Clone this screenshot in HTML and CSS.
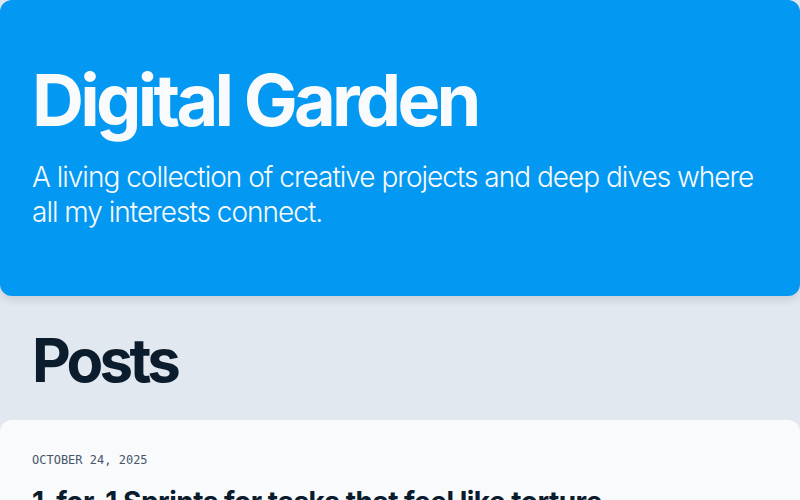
FILE: index.html
```html
<!DOCTYPE html>
<html lang="en">
<head>
<meta charset="utf-8">
<title>Digital Garden</title>
<link rel="stylesheet" href="styles.css">
</head>
<body>
<header class="hero">
  <h1 class="hero-title">Digital Garden</h1>
  <p class="hero-sub">A living collection of creative projects and deep dives where all my interests connect.</p>
</header>
<main class="content">
  <h2 class="section-title">Posts</h2>
  <article class="post-card">
    <time class="post-date">OCTOBER 24, 2025</time>
    <h3 class="post-title">1-for-1 Sprints for tasks that feel like torture</h3>
  </article>
</main>
</body>
</html>
```
FILE: styles.css
```css
* { box-sizing: border-box; }
html, body { margin: 0; padding: 0; }
body {
  background: #e2e8f0;
  font-family: "Inter", "Noto Sans", sans-serif;
  color: #0b1c2c;
}
.hero {
  background: #0398f1;
  border-radius: 12px;
  padding: 64px 32px 66px;
  color: #f8fafc;
  box-shadow: 0 4px 8px rgba(15, 23, 42, 0.12);
}
.hero-title {
  margin: 0;
  font-size: 72px;
  line-height: 1;
  font-weight: 700;
  letter-spacing: -0.052em;
}
.hero-sub {
  margin: 24px 0 0;
  font-size: 28px;
  line-height: 35px;
  font-weight: 300;
  letter-spacing: -1px;
}
.content {
  padding-top: 34px;
}
.section-title {
  margin: 0 32px 30px;
  font-size: 60px;
  line-height: 1;
  font-weight: 700;
  letter-spacing: -0.063em;
  color: #0b1c2c;
}
.post-card {
  background: #f8fafc;
  border-radius: 12px;
  padding: 32px;
  display: flex;
  flex-direction: column;
  gap: 18px;
}
.post-date {
  font-family: "DejaVu Sans Mono", monospace;
  font-size: 12px;
  line-height: 16px;
  color: #475569;
}
.post-title {
  margin: 0;
  font-size: 28px;
  line-height: 1.2;
  font-weight: 700;
  letter-spacing: -0.5px;
  color: #0b1c2c;
}
```
